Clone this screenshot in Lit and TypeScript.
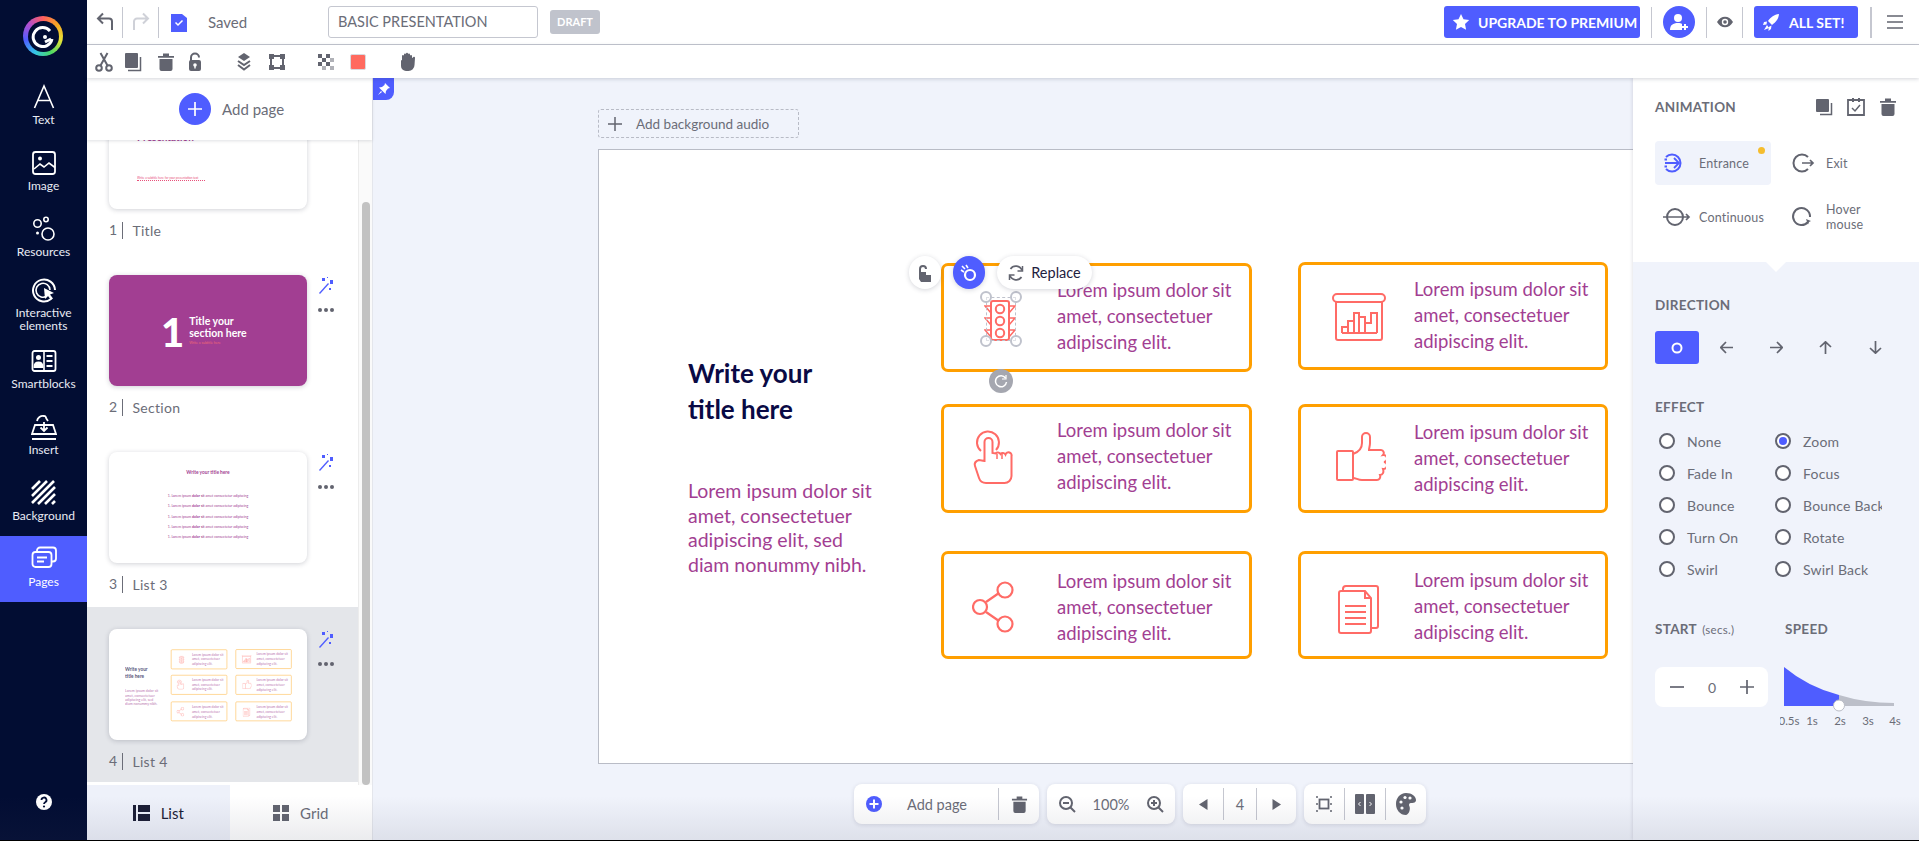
import { LitElement, html, css, svg } from "lit";
import { customElement } from "lit/decorators.js";

const I = (w: number, h: number, vb: string, body: unknown, cls = "") =>
  html`<svg class=${cls} width=${w} height=${h} viewBox=${vb} fill="none">${body}</svg>`;

const G = "#62646f";
const BLUE = "#4f5dff";
const RED = "#ff6b66";

const ic = {
  undo: (c: string) => I(18, 20, "0 0 18 20", svg`<path d="M16 18V9.5a3 3 0 0 0-3-3H3M7 1.5 2 6.500l5 5" stroke=${c} stroke-width="2"/>`),
  redo: (c: string) => I(18, 20, "0 0 18 20", svg`<path d="M2 18V9.500a3 3 0 0 1 3-3h10M11 1.500l5 5-5 5" stroke=${c} stroke-width="2"/>`),
  scissors: I(18, 20, "0 0 18 20", svg`<circle cx="4" cy="16" r="2.800" stroke=${G} stroke-width="2"/><circle cx="14" cy="16" r="2.800" stroke=${G} stroke-width="2"/><path d="M5.500 13.500 12.500 1M12.500 13.500 5.500 1" stroke=${G} stroke-width="2"/>`),
  copy: I(18, 20, "0 0 18 20", svg`<rect x="1" y="1" width="13" height="15" rx="1" fill=${G}/><path d="M16.500 5v13.500H4" stroke=${G} stroke-width="1.500"/>`),
  trash: I(18, 20, "0 0 18 20", svg`<path d="M1 4h16v1.800H1zM6 1.500h6V4H6zM2.500 7h13v10a2 2 0 0 1-2 2h-9a2 2 0 0 1-2-2z" fill=${G}/>`),
  lock: I(18, 20, "0 0 18 20", svg`<path d="M5 9V5.500a4 4 0 0 1 8 0" stroke=${G} stroke-width="2"/><rect x="3" y="8" width="12" height="11" rx="2" fill=${G}/><circle cx="9" cy="13" r="1.800" fill="#fff"/><rect x="8.300" y="13" width="1.400" height="3.500" fill="#fff"/>`),
  layers: I(18, 20, "0 0 18 20", svg`<path d="M9 1l6 4-6 4-6-4z" fill=${G}/><path d="M3 9l6 4 6-4M3 13l6 4.500 6-4.500" stroke=${G} stroke-width="2"/>`),
  group: I(18, 20, "0 0 18 20", svg`<rect x="3" y="4" width="12" height="12" stroke=${G} stroke-width="2"/><rect x="1" y="2" width="5" height="5" fill=${G}/><rect x="12" y="2" width="5" height="5" fill=${G}/><rect x="1" y="13" width="5" height="5" fill=${G}/><rect x="12" y="13" width="5" height="5" fill=${G}/>`),
  checker: I(18, 20, "0 0 18 20", svg`<g fill=${G}><rect x="1" y="2" width="4" height="4"/><rect x="9" y="2" width="4" height="4"/><rect x="5" y="6" width="4" height="4"/><rect x="13" y="6" width="4" height="4" opacity=".5"/><rect x="1" y="10" width="4" height="4"/><rect x="9" y="10" width="4" height="4"/><rect x="5" y="14" width="4" height="4" opacity=".5"/><rect x="13" y="14" width="4" height="4" opacity=".5"/></g>`),
  hand: I(18, 20, "0 0 18 20", svg`<path d="M3 8.500V4a1 1 0 0 1 2 0V2.500a1 1 0 0 1 2 0V1.800a1 1 0 0 1 2 0v.7a1 1 0 0 1 2 0V4a1 1 0 0 1 2 0v2l1-.5a1 1 0 0 1 2 .5l-.5 7a6 6 0 0 1-6 6H7a5 5 0 0 1-5-5V8.500a.6.6 0 0 1 1 0z" fill=${G}/>`),
};

const railIcons: Record<string, unknown> = {
  Text: svg`<path d="M3.500 24 13 2l9.500 22M7 16.500h12" stroke="#fff" stroke-width="1.600"/>`,
  Image: svg`<rect x="2" y="2" width="22" height="22" rx="2.500" stroke="#fff" stroke-width="1.800"/><path d="M3 19l6-5 4 3 5-4 6 4.500" stroke="#fff" stroke-width="1.600"/><circle cx="9" cy="8.500" r="2" fill="#fff"/>`,
  Resources: svg`<circle cx="6.500" cy="7.500" r="3.700" stroke="#fff" stroke-width="1.600"/><circle cx="15" cy="3.500" r="2.200" stroke="#fff" stroke-width="1.600"/><circle cx="17" cy="18" r="6" stroke="#fff" stroke-width="1.600"/><circle cx="6.500" cy="17" r="1.500" fill="#fff"/>`,
  Interactive: svg`<path d="M20 22A11 11 0 1 1 24 13" stroke="#fff" stroke-width="2"/><path d="M16 19a7 7 0 1 1 3-6" stroke="#fff" stroke-width="1.600"/><path d="M13 11l10 5-4 1.500 3 4-2 1.500-3-4-3 3z" fill="#fff"/>`,
  Smartblocks: svg`<rect x="1.500" y="3" width="23" height="20" rx="2" stroke="#fff" stroke-width="1.800"/><path d="M13 3v20" stroke="#fff" stroke-width="1.600"/><circle cx="7.500" cy="9.500" r="2.500" fill="#fff"/><path d="M3.500 19c0-6 8-6 8 0zM15.500 8h6M15.500 13h6M15.500 18h6" stroke="#fff" stroke-width="1.800" fill="#fff"/>`,
  Insert: svg`<path d="M4 11h6M16 11h6l3 9H1l3-9zM1 25h24" stroke="#fff" stroke-width="1.800"/><path d="M6 7a6 6 0 0 1 7-5c3 .5 0 0 4 5M13 8v9M9.500 13.500 13 17l3.500-3.500" stroke="#fff" stroke-width="1.800"/>`,
  Background: svg`<g stroke="#fff" stroke-width="2.600"><path d="M1 9 9 1M1 16 16 1M1 23 23 1M7 24 24 7M14 24 24 14M21 24l3-3"/></g>`,
  Pages: svg`<rect x="6" y="1.500" width="19" height="14" rx="3" stroke="#fff" stroke-width="1.800"/><rect x="1.500" y="6" width="19" height="15" rx="3" fill=${BLUE} stroke="#fff" stroke-width="1.800"/><path d="M6 11.500h10M6 15.500h7" stroke="#fff" stroke-width="1.800"/>`,
};

const rail = [
  ["Text", "Text"], ["Image", "Image"], ["Resources", "Resources"], ["Interactive", "Interactive elements"],
  ["Smartblocks", "Smartblocks"], ["Insert", "Insert"], ["Background", "Background"], ["Pages", "Pages"],
];

const cardIcons: Record<string, [number, number, string, unknown]> = {
  light: [32, 45, "0 0 32 45", svg`<rect x="7" y="4" width="18" height="39" rx="2" stroke=${RED} stroke-width="2"/><circle cx="16" cy="12" r="4.200" stroke=${RED} stroke-width="2"/><circle cx="16" cy="24" r="4.200" stroke=${RED} stroke-width="2"/><circle cx="16" cy="36" r="4.200" stroke=${RED} stroke-width="2"/><path d="M7 9H1l6 7M25 9h6l-6 7M7 21H1l6 7M25 21h6l-6 7M7 33H1l6 7M25 33h6l-6 7" stroke=${RED} stroke-width="1.500"/>`],
  chart: [54, 48, "0 0 54 48", svg`<rect x="1" y="1" width="52" height="8" rx="4" stroke=${RED} stroke-width="2"/><path d="M4 9v36a2 2 0 0 0 2 2h42a2 2 0 0 0 2-2V9" stroke=${RED} stroke-width="2"/><path d="M10 40v-6h6v-6h6v-8h5v20M16 40v-6M22 40V28M27 40V24h6v16M33 30h6V20h6v20M10 40h35" stroke=${RED} stroke-width="2"/>`],
  hand: [42, 56, "0 0 42 56", svg`<path d="M12.500 33V13a4 4 0 0 1 8 0v11l3 .5a3 3 0 0 1 5 .5 3 3 0 0 1 5 .5 3 3 0 0 1 6 2V47a7 7 0 0 1-7 7H14c-4 0-6-2-7-5l-4-12c-1-3 1-5 4-6l5.500 1" stroke=${RED} stroke-width="2"/><path d="M9 22a11 11 0 1 1 15-1" stroke=${RED} stroke-width="2"/><path d="M25 25v5M30 25v5" stroke=${RED} stroke-width="1.500"/>`],
  thumb: [50, 50, "0 0 50 50", svg`<rect x="1" y="19" width="16" height="29" rx="1" stroke=${RED} stroke-width="2"/><path d="M17 22c6-2 9-6 9-11V5a4 4 0 0 1 8 0v6c0 3-1 5-1 7h12a3 3 0 0 1 2 5 3 3 0 0 1 1 7 3 3 0 0 1-1 7c1 3 0 6-3 6 1 3-1 5-3 5H26c-4 0-6-2-9-2" stroke=${RED} stroke-width="2"/>`],
  share: [42, 52, "0 0 42 52", svg`<circle cx="8" cy="26" r="7" stroke=${RED} stroke-width="2.200"/><circle cx="33" cy="9" r="7.500" stroke=${RED} stroke-width="2.200"/><circle cx="33" cy="43" r="7.500" stroke=${RED} stroke-width="2.200"/><path d="M14 21l13-9M14 31l13 9" stroke=${RED} stroke-width="2.200"/>`],
  docs: [42, 50, "0 0 42 50", svg`<path d="M5 6V4a3 3 0 0 1 3-3h30a2 2 0 0 1 2 2v38a2 2 0 0 1-2 2h-4" stroke=${RED} stroke-width="2"/><path d="M3 6h24l6 7v33a2 2 0 0 1-2 2H3a2 2 0 0 1-2-2V8a2 2 0 0 1 2-2zM27 6v7h6" stroke=${RED} stroke-width="2"/><path d="M7 21h21M7 27h21M7 33h21M7 39h21" stroke=${RED} stroke-width="2"/>`],
};

/* coordinates on the slide's own free canvas */
const cards = [
  { x: 342, y: 113, w: 311, h: 109, ty: 14, icon: "light", cx: 59, cy: 56 },
  { x: 699, y: 112, w: 310, h: 108, ty: 14, icon: "chart", cx: 61, cy: 55 },
  { x: 342, y: 254, w: 311, h: 109, ty: 13, icon: "hand", cx: 52, cy: 53 },
  { x: 699, y: 254, w: 310, h: 109, ty: 15, icon: "thumb", cx: 63, cy: 53 },
  { x: 342, y: 401, w: 311, h: 108, ty: 17, icon: "share", cx: 52, cy: 56 },
  { x: 699, y: 401, w: 310, h: 108, ty: 16, icon: "docs", cx: 61, cy: 59 },
];

const effects = [
  ["None", "Zoom"], ["Fade In", "Focus"], ["Bounce", "Bounce Back"], ["Turn On", "Rotate"], ["Swirl", "Swirl Back"],
];

@customElement("app-root")
export class AppRoot extends LitElement {
  static styles = css`
    :host { display: block; width: 1919px; height: 841px; overflow: hidden; position: relative; background: #000;
      font-family: "Lato", "Noto Sans", sans-serif; color: #6b6d78; }
    * { box-sizing: border-box; }
    svg { display: block; flex: none; }
    .app { display: flex; height: 840px; }
    .rail { width: 87px; flex: none; background: #020d33; display: flex; flex-direction: column; color: #e9ebf3; }
    .logo { height: 74px; padding: 16px 23px 0; }
    .ring { width: 40px; height: 40px; border-radius: 50%; background: conic-gradient(#ff5f5f, #f5a623, #e8e337, #4cd964, #35c6e8, #4f5dff, #b14fd0, #ff5f5f); display: flex; align-items: center; justify-content: center; }
    .ring-in { width: 31px; height: 31px; border-radius: 50%; background: #020d33; display: flex; align-items: center; justify-content: center; }
    .ritem { height: 66px; padding-top: 10px; display: flex; flex-direction: column; align-items: center; font-size: 12px; line-height: 14px; text-align: center; gap: 3px; }
    .ritem.tight { padding-top: 5px; line-height: 12.500px; gap: 4px; }
    .ritem.on { background: #4f5dff; color: #fff; }
    .help { margin: auto 0 29px; display: flex; justify-content: center; }
    .right { flex: 1; min-width: 0; display: flex; flex-direction: column; }
    .top { height: 45px; flex: none; background: #fff; border-bottom: 1px solid #c5c7d0; display: flex; align-items: center; padding-right: 16px; }
    .m9 { margin-left: 9px; } .m8 { margin-left: 8px; } .m12 { margin-left: 12px; }
    .vd { width: 1px; height: 31px; background: #c5c7d0; flex: none; }
    .vd.m11 { margin-left: 11px; } .vd.m8 { margin-left: 8px; } .vd.m12 { margin-left: 12px; }
    .vd.thick { width: 2px; }
    .saved { margin-left: 21px; width: 60px; font-size: 15px; }
    .title { margin-left: 60px; width: 210px; height: 32px; border: 1px solid #c5c7d0; border-radius: 3px; padding-left: 9px; font-size: 14.500px; line-height: 30px; }
    .draft { margin-left: 12px; width: 50px; height: 24px; background: #c0c3cc; color: #fff; font-size: 11px; font-weight: 700; line-height: 24px; text-align: center; border-radius: 3px; }
    .sp { flex: 1; }
    .btn { height: 32px; background: #4f5dff; color: #fff; border-radius: 3px; display: flex; align-items: center; font-size: 14px; font-weight: 700; flex: none; }
    .up { width: 196px; padding-left: 8px; gap: 8px; }
    .set { width: 104px; padding-left: 9px; gap: 9px; margin-left: 11px; }
    .user { width: 32px; height: 32px; border-radius: 50%; background: #4f5dff; margin-left: 11px; display: flex; align-items: center; justify-content: center; flex: none; }
    .eye { margin-left: 9px; }
    .burger { margin-left: 15px; }
    .tools { height: 33px; flex: none; background: #fff; display: flex; align-items: center; padding-left: 8px; box-shadow: 0 1px 4px rgba(40,44,70,.2); position: relative; z-index: 5; }
    .g11 { margin-left: 11px; } .g15 { margin-left: 15px; } .g31 { margin-left: 31px; } .g33 { margin-left: 33px; }
    .swatch { width: 16px; height: 16px; background: #ff6a5f; border-radius: 2px; border: 1px solid #d9d9de; }
    .body { flex: 1; min-height: 0; display: flex; position: relative; }

    .side { width: 286px; flex: none; background: #fff; display: flex; flex-direction: column; position: relative; z-index: 3; border-right: 1px solid #e4e6ec; }
    .addp { height: 62px; flex: none; display: flex; align-items: center; padding-left: 92px; gap: 11px; background: #fff; box-shadow: 0 1px 3px rgba(40,44,70,.15); position: relative; z-index: 2; font-size: 15px; }
    .plus { width: 32px; height: 32px; border-radius: 50%; background: #4f5dff; display: flex; align-items: center; justify-content: center; }
    .lst { flex: 1; min-height: 0; display: flex; overflow: hidden; }
    .items { width: 271px; flex: none; }
    .it { height: 177px; padding: 22px 0 0 22px; display: flex; flex-wrap: wrap; align-content: flex-start; position: relative; }
    .it.first { margin-top: -64px; }
    .it.sel { background: #e4e6ea; height: 175px; }
    .thumb { width: 198px; height: 111px; background: #fff; border-radius: 8px; box-shadow: 0 1px 5px rgba(40,44,70,.22); overflow: hidden; position: relative; flex: none; }
    .acts { width: 32px; margin-left: 11px; padding-top: 2px; display: flex; flex-direction: column; gap: 14px; }
    .dots { display: flex; gap: 2px; padding-left: 0; }
    .dots i { width: 4px; height: 4px; border-radius: 50%; background: #62646f; display: block; }
    .lab { width: 100%; margin-top: 13px; font-size: 14px; line-height: 18px; display: flex; letter-spacing: .3px; }
    .lab b { font-weight: 400; border-right: 1px solid #6b6d78; padding-right: 5px; margin-right: 9px; line-height: 16px; height: 17px; }
    .track { flex: 1; background: #fafafa; border-left: 1px solid #ececec; padding: 62px 2px 0 3px; }
    .bar { height: 100%; background: #c2c2c2; border-radius: 5px; }
    .tabs { height: 55px; flex: none; display: flex; font-size: 15px; position: relative; z-index: 2; }
    .tab { width: 143px; display: flex; align-items: center; justify-content: center; gap: 11px; background: #fff; }
    .tab.on { background: #eef1fa; color: #1b1d35; }

    .canvas { flex: 1; min-width: 0; background: #f0f3fb; padding: 31px 0 0 225px; overflow: hidden; position: relative; }
    .pin { position: absolute; left: 0; top: 0; width: 21px; height: 22px; background: #4f5dff; border-radius: 0 0 8px 0; display: flex; align-items: center; justify-content: center; }
    .audio { width: 201px; height: 29px; border: 1.500px dashed #b8bbc6; border-radius: 3px; display: flex; align-items: center; gap: 14px; padding-left: 9px; font-size: 13.500px; }
    .slide { margin-top: 11px; width: 1094px; height: 615px; background: #fff; border: 1px solid #b9bcc6; position: relative; }
    .page { position: absolute; left: 0; top: 0; width: 1092px; height: 613px; color: #a23e92; }
    .t1 { position: absolute; left: 89px; top: 205px; font-size: 26px; line-height: 36px; font-weight: 700; color: #0a0a45; }
    .t2 { position: absolute; left: 89px; top: 329px; font-size: 19.500px; line-height: 24.700px; }
    .card { position: absolute; border: 3px solid #ff9f00; border-radius: 7px; }
    .cic { position: absolute; }
    .ctx { position: absolute; left: 113px; font-size: 18.500px; line-height: 26px; white-space: nowrap; }
    .thumb .page.mini { transform: scale(.181); transform-origin: 0 0; opacity: .72; }
    .sel-box { position: absolute; left: 387px; top: 147px; width: 30px; height: 44px; border: 1.500px dashed #bfc2cc; }
    .hd { position: absolute; width: 12px; height: 12px; border: 2px solid #bfc2cc; border-radius: 50%; background: rgba(255,255,255,.5); }
    .h1 { left: -7px; top: -7px; } .h2 { right: -7px; top: -7px; } .h3 { left: -7px; bottom: -7px; } .h4 { right: -7px; bottom: -7px; }
    .rot { position: absolute; left: 390px; top: 219px; width: 24px; height: 24px; border-radius: 50%; background: #a5a7b0; display: flex; align-items: center; justify-content: center; }
    .fl { position: absolute; top: 106px; height: 33px; background: #fff; border-radius: 17px; box-shadow: 0 1px 5px rgba(40,44,70,.2); display: flex; align-items: center; justify-content: center; }
    .f1 { left: 310px; width: 32px; } .f2 { left: 354px; width: 32px; background: #4f5dff; }
    .f3 { left: 398px; width: 95px; gap: 7px; color: #1e2140; font-size: 14.500px; }

    .bot { position: absolute; left: 481px; top: 706px; display: flex; gap: 8px; z-index: 2; }
    .grp { height: 40px; background: #fff; border-radius: 8px; display: flex; box-shadow: 0 1px 4px rgba(40,44,70,.14); font-size: 14.500px; }
    .c { display: flex; align-items: center; justify-content: center; height: 32px; margin-top: 4px; flex: none; }
    .dv { border-left: 1px solid #c5c7d0; }
    .w40 { width: 40px; } .w41 { width: 41px; } .w48 { width: 48px; } .w33 { width: 33px; }
    .w144 { width: 144px; justify-content: flex-start; padding-left: 12px; gap: 25px; }

    .panel { width: 286px; flex: none; background: #f0f3fb; box-shadow: -1px 0 3px rgba(40,44,70,.12); position: relative; z-index: 3; }
    .ptop { height: 184px; background: #fff; padding: 19px 22px 0; position: relative; }
    .ptop::after { content: ""; position: absolute; left: 133px; top: 184px; border: 10px solid transparent; border-top-color: #fff; border-bottom: 0; }
    .phead { display: flex; align-items: center; height: 20px; }
    .h { font-size: 13.500px; font-weight: 700; letter-spacing: .3px; line-height: 18px; }
    .hic { margin-left: auto; display: flex; gap: 14px; }
    .atabs { display: grid; grid-template-columns: 116px 116px; column-gap: 11px; row-gap: 10px; margin-top: 24px; }
    .atab { height: 44px; border-radius: 4px; display: flex; align-items: center; gap: 8px; font-size: 12.500px; line-height: 15px; position: relative; letter-spacing: .2px; }
    .atab.on { background: #f0f3fb; }
    .dot { position: absolute; right: 6px; top: 6px; width: 7px; height: 7px; border-radius: 50%; background: #f5bd2e; }
    .pbot { padding: 34px 0 0 22px; }
    .dir { display: flex; margin-top: 17px; height: 33px; align-items: center; }
    .dact { width: 44px; height: 33px; background: #4f5dff; border-radius: 3px; display: flex; align-items: center; justify-content: center; }
    .arr { width: 49.500px; display: flex; justify-content: center; }
    .arr.first { margin-left: 3px; }
    .eh { margin-top: 34px; }
    .fx { display: grid; grid-template-columns: 116px 111px; margin-top: 9px; }
    .fx div { height: 32px; display: flex; align-items: center; font-size: 14px; white-space: nowrap; overflow: hidden; letter-spacing: .2px; }
    .fx i { width: 16px; height: 16px; border: 2px solid #62646f; border-radius: 50%; background: #fff; margin: 0 12px 0 4px; flex: none; display: flex; align-items: center; justify-content: center; }
    .fx i.on::after { content: ""; width: 8px; height: 8px; border-radius: 50%; background: #4f5dff; }
    .hrow { display: flex; margin-top: 35px; }
    .hrow .h { width: 130px; } .hrow small { font-weight: 400; font-size: 11.500px; margin-left: 2px; }
    .srow { display: flex; margin-top: 28px; gap: 12px; }
    .step { width: 113px; height: 40px; background: #fff; border-radius: 8px; display: flex; align-items: center; justify-content: space-between; padding: 0 14px 0 15px; font-size: 14px; }
    .chart text { font-family: "Lato", sans-serif; font-size: 11.500px; fill: #6b6d78; text-anchor: middle; }
    .shade { position: absolute; left: 0; right: 0; top: 796px; height: 44px; pointer-events: none; z-index: 9; background: linear-gradient(rgba(60,64,90,0), rgba(60,64,90,.1)); }
    .mT1 { position: absolute; left: 28px; top: 33px; font-size: 10px; font-weight: 700; color: #a23e92; }
    .mT2 { position: absolute; left: 28px; top: 78px; width: 68px; font-size: 3px; line-height: 4px; color: #e8507a; white-space: nowrap; overflow: hidden; border-bottom: 1px dotted #e8507a; }
    .thumb.sec { background: #a23e92; color: #fff; display: flex; align-items: center; padding: 2px 0 0 52px; gap: 5px; }
    .sec .n { font-size: 40px; font-weight: 900; line-height: 40px; }
    .sec .st { font-size: 10.500px; font-weight: 700; line-height: 11.500px; }
    .sec .sb { font-size: 3.500px; line-height: 8px; color: #ee6a72; font-weight: 400; }
    .thumb.lst3 { display: flex; flex-direction: column; align-items: center; color: #a23e92; padding-top: 17px; }
    .lst3 .tt { font-size: 4.800px; font-weight: 700; margin-bottom: 15px; line-height: 7px; }
    .lst3 .ll { font-size: 3.500px; line-height: 10.300px; white-space: nowrap; }
  `;

  private page(mini: boolean) {
    return html`<div class="page ${mini ? "mini" : ""}">
      <div class="t1">Write your<br />title here</div>
      <div class="t2">Lorem ipsum dolor sit<br />amet, consectetuer<br />adipiscing elit, sed<br />diam nonummy nibh.</div>
      ${cards.map((c) => {
        const [w, h, vb, b] = cardIcons[c.icon];
        return html`<div class="card" style="left:${c.x}px;top:${c.y}px;width:${c.w}px;height:${c.h}px">
          <div class="cic" style="left:${c.cx - 3 - w / 2}px;top:${c.cy - 3 - h / 2}px">${I(w, h, vb, b)}</div>
          <div class="ctx" style="top:${c.ty - 3}px">Lorem ipsum dolor sit<br />amet, consectetuer<br />adipiscing elit.</div>
        </div>`;
      })}
    </div>`;
  }

  private acts() {
    return html`<div class="acts">
      ${I(16, 17, "0 0 16 17", svg`<path d="M1 16 10 6l1 1-9 10z" fill=${BLUE}/><path d="M4 1h3v3H4zM12 3h3v4h-3zM11 11h2v2h-2zM9 0h1v1H9z" fill=${BLUE}/>`)}
      <div class="dots"><i></i><i></i><i></i></div>
    </div>`;
  }

  render() {
    return html`<div class="app">
      <nav class="rail">
        <div class="logo"><div class="ring"><div class="ring-in">${I(24, 24, "0 0 24 24", svg`<path d="M19 7A9.500 9.500 0 1 0 21 15" stroke="#fff" stroke-width="3"/><circle cx="14" cy="13" r="2" fill="#fff"/><path d="M14 18l6-3" stroke="#fff" stroke-width="3"/>`)}</div></div></div>
        ${rail.map(([k, l]) => html`<div class="ritem ${k === "Interactive" ? "tight" : ""} ${k === "Pages" ? "on" : ""}">
          ${I(26, 26, "0 0 26 26", railIcons[k])}<span>${l}</span></div>`)}
        <div class="help">${I(18, 18, "0 0 18 18", svg`<circle cx="9" cy="9" r="8" fill="#fff"/><path d="M6.500 7a2.500 2.500 0 1 1 3.700 2.200c-.8.5-1.200.9-1.200 1.800" stroke="#020d33" stroke-width="1.800"/><circle cx="9" cy="13.500" r="1.100" fill="#020d33"/>`)}</div>
      </nav>
      <div class="right">
        <header class="top">
          <span class="m9">${ic.undo(G)}</span><div class="vd m8"></div>
          <span class="m9">${ic.redo("#cfd1d8")}</span><div class="vd m8"></div>
          <span class="m12">${I(16, 20, "0 0 16 20", svg`<path d="M0 2h11l5 4v14H0z" fill=${BLUE}/><path d="M4.500 10.500 7 13l4.500-4.500" stroke="#fff" stroke-width="1.500"/>`)}</span>
          <span class="saved">Saved</span>
          <div class="title">BASIC PRESENTATION</div>
          <div class="draft">DRAFT</div>
          <div class="sp"></div>
          <div class="btn up">${I(18, 18, "0 0 18 18", svg`<path d="M9 1l2.500 5.300 5.700.7-4.200 4 1.100 5.700L9 14l-5.100 2.700L5 11 .800 7l5.700-.7z" fill="#fff"/>`)}UPGRADE TO PREMIUM</div>
          <div class="vd m11"></div>
          <div class="user">${I(20, 20, "0 0 20 20", svg`<circle cx="9" cy="6" r="4" fill="#fff"/><path d="M1 18c0-5 3-7 8-7 2 0 3 .3 4 1v6z" fill="#fff"/><path d="M16 12v6M13 15h6" stroke="#fff" stroke-width="2"/>`)}</div>
          <div class="vd m11"></div>
          <span class="eye">${I(18, 14, "0 0 18 14", svg`<path d="M1 7c4-7 12-7 16 0-4 7-12 7-16 0z" fill=${G}/><circle cx="9" cy="7" r="3.200" fill="#fff"/><circle cx="9" cy="7" r="1.800" fill=${G}/>`)}</span>
          <div class="vd m8"></div>
          <div class="btn set">${I(17, 18, "0 0 17 18", svg`<path d="M16 1c-5 .5-8 3-11 7l4 4c4-3 6.500-6 7-11zM4 8.500 1 9l-1 3 3.500-.5zM8.500 12.500 8 16l-2.500 2 .2-4zM4 12l-3 5 5-2z" fill="#fff"/>`)}ALL SET!</div>
          <div class="vd thick m12"></div>
          <span class="burger">${I(16, 14, "0 0 16 14", svg`<path d="M0 1h16M0 7h16M0 13h16" stroke=${G} stroke-width="1.500"/>`)}</span>
        </header>
        <div class="tools">
          ${ic.scissors}<span class="g11">${ic.copy}</span><span class="g15">${ic.trash}</span><span class="g11">${ic.lock}</span>
          <span class="g31">${ic.layers}</span><span class="g15">${ic.group}</span><span class="g31">${ic.checker}</span>
          <div class="swatch g15"></div><span class="g33">${ic.hand}</span>
        </div>
        <div class="body">
          <aside class="side">
            <div class="addp"><div class="plus">${I(14, 14, "0 0 14 14", svg`<path d="M7 0v14M0 7h14" stroke="#fff" stroke-width="1.700"/>`)}</div>Add page</div>
            <div class="lst">
              <div class="items">
                <div class="it first">
                  <div class="thumb"><div class="mT1">Presentation</div><div class="mT2">Write a subtitle here for your presentation text</div></div>
                  <div class="lab"><b>1</b>Title</div>
                </div>
                <div class="it">
                  <div class="thumb sec"><div class="n">1</div><div class="st">Title your<br />section here<div class="sb">Write a subtitle here</div></div></div>
                  ${this.acts()}
                  <div class="lab"><b>2</b>Section</div>
                </div>
                <div class="it">
                  <div class="thumb lst3"><div class="tt">Write your title here</div>
                    ${[1, 2, 3, 4, 5].map(() => html`<div class="ll">1. Lorem ipsum <b>dolor sit</b> amet consectetur adipiscing</div>`)}
                  </div>
                  ${this.acts()}
                  <div class="lab"><b>3</b>List 3</div>
                </div>
                <div class="it sel">
                  <div class="thumb">${this.page(true)}</div>
                  ${this.acts()}
                  <div class="lab"><b>4</b>List 4</div>
                </div>
              </div>
              <div class="track"><div class="bar"></div></div>
            </div>
            <div class="tabs">
              <div class="tab on">${I(17, 16, "0 0 17 16", svg`<path d="M0 0h3v16H0zM5 0h12v7H5zM5 9h12v7H5z" fill="#1b1d35"/>`)}List</div>
              <div class="tab">${I(16, 16, "0 0 16 16", svg`<path d="M0 0h7v7H0zM9 0h7v7H9zM0 9h7v7H0zM9 9h7v7H9z" fill=${G}/>`)}Grid</div>
            </div>
          </aside>
          <main class="canvas">
            <div class="pin">${I(12, 12, "0 0 12 12", svg`<path d="M7 0l5 5-2 .5L8 8 7.500 11 1 4.500 4 4l2.500-2zM3 8l-3 4 4-3z" fill="#fff"/>`)}</div>
            <div class="audio">${I(14, 14, "0 0 14 14", svg`<path d="M7 0v14M0 7h14" stroke=${G} stroke-width="1.500"/>`)}Add background audio</div>
            <div class="slide">
              ${this.page(false)}
              <div class="sel-box"><span class="hd h1"></span><span class="hd h2"></span><span class="hd h3"></span><span class="hd h4"></span></div>
              <div class="rot">${I(14, 14, "0 0 14 14", svg`<path d="M11.500 4A5.500 5.500 0 1 0 12.500 8" stroke="#fff" stroke-width="1.500"/><path d="M12 1v4H8" stroke="#fff" stroke-width="1.200"/>`)}</div>
              <div class="fl f1">${I(16, 18, "0 0 16 18", svg`<path d="M3 8V5a3 3 0 0 1 6 0" stroke=${G} stroke-width="2"/><path d="M2 8h7v3h5v7H4l-2-3z" fill=${G}/>`)}</div>
              <div class="fl f2">${I(18, 18, "0 0 18 18", svg`<circle cx="10" cy="11" r="5" stroke="#fff" stroke-width="2.200"/><path d="M2 2l3 3M6 1l2 3M1 6l3 2" stroke="#fff" stroke-width="1.600"/>`)}</div>
              <div class="fl f3">${I(16, 18, "0 0 16 18", svg`<path d="M14 6.500A6.500 6.500 0 0 0 2.500 5M2 11.500A6.500 6.500 0 0 0 13.500 13" stroke=${G} stroke-width="1.700"/><path d="M14.500 2v5h-5M1.500 16v-5h5" stroke=${G} stroke-width="1.500"/>`)}Replace</div>
            </div>
            <div class="bot">
              <div class="grp">
                <div class="c w144">${I(16, 16, "0 0 16 16", svg`<circle cx="8" cy="8" r="8" fill=${BLUE}/><path d="M8 3.500v9M3.500 8h9" stroke="#fff" stroke-width="2"/>`)}Add page</div>
                <div class="c w41 dv">${I(17, 19, "0 0 18 20", svg`<path d="M1 4h16v1.800H1zM6 1.500h6V4H6zM2.500 7h13v10a2 2 0 0 1-2 2h-9a2 2 0 0 1-2-2z" fill=${G}/>`)}</div>
              </div>
              <div class="grp">
                <div class="c w40">${I(17, 17, "0 0 17 17", svg`<circle cx="7" cy="7" r="6" stroke=${G} stroke-width="2"/><path d="M11 11l5 5" stroke=${G} stroke-width="2"/><path d="M4 7h6" stroke=${G} stroke-width="2"/>`)}</div>
                <div class="c w48">100%</div>
                <div class="c w40">${I(17, 17, "0 0 17 17", svg`<circle cx="7" cy="7" r="6" stroke=${G} stroke-width="2"/><path d="M11 11l5 5" stroke=${G} stroke-width="2"/><path d="M4 7h6M7 4v6" stroke=${G} stroke-width="2"/>`)}</div>
              </div>
              <div class="grp">
                <div class="c w40">${I(9, 11, "0 0 9 11", svg`<path d="M8.500 0v11L0 5.500z" fill=${G}/>`)}</div>
                <div class="c w33 dv">4</div>
                <div class="c w40 dv">${I(9, 11, "0 0 9 11", svg`<path d="M.5 0v11L9 5.500z" fill=${G}/>`)}</div>
              </div>
              <div class="grp">
                <div class="c w40">${I(16, 16, "0 0 16 16", svg`<rect x="3.500" y="3.500" width="9" height="9" stroke=${G} stroke-width="1.800"/><path d="M0 1h2M0 8h2M0 15h2M14 1h2M14 8h2M14 15h2" stroke=${G} stroke-width="1.600"/>`)}</div>
                <div class="c w41 dv">${I(20, 20, "0 0 20 20", svg`<rect x="0" y="0" width="9" height="20" rx="1" fill=${G}/><rect x="11" y="0" width="9" height="20" rx="1" fill=${G}/><path d="M5.500 8 3.500 10l2 2M14.500 8l2 2-2 2" stroke="#fff" stroke-width="1"/>`)}</div>
                <div class="c w41 dv">${I(20, 22, "0 0 20 22", svg`<path d="M10 0c6 0 10 3.500 10 7 0 3-3.500 3-5 3-2 0-2.500 2-1.500 3.500 1 2 0 7.500-3.500 8.500C4 22 0 17 0 11S4 0 10 0z" fill=${G}/><circle cx="5" cy="9" r="1.600" fill="#fff"/><circle cx="9" cy="4.500" r="1.600" fill="#fff"/><circle cx="14" cy="5" r="1.600" fill="#fff"/><circle cx="6" cy="15" r="1.600" fill="#fff"/>`)}</div>
              </div>
            </div>
          </main>
          <aside class="panel">
            <div class="ptop">
              <div class="phead"><span class="h">ANIMATION</span>
                <div class="hic">
                  ${I(18, 20, "0 0 18 20", svg`<rect x="1" y="2" width="13" height="13" rx="1" fill=${G}/><path d="M16.500 6v11.500H5" stroke=${G} stroke-width="1.500"/>`)}
                  ${I(18, 20, "0 0 18 20", svg`<path d="M1 3h16v15H1z" stroke=${G} stroke-width="1.800"/><path d="M5 1h2v4H5zM11 1h2v4h-2z" fill=${G}/><path d="M5 11l3 3 5-6" stroke=${G} stroke-width="1.500"/>`)}
                  ${ic.trash}
                </div>
              </div>
              <div class="atabs">
                <div class="atab on">${I(36, 22, "0 0 36 22", svg`<path d="M11 5a8.500 8.500 0 1 1 0 12" stroke=${BLUE} stroke-width="2"/><path d="M10 11h14M19 6l5 5-5 5M9.500 7.500H12M9.500 14.500H12" stroke=${BLUE} stroke-width="1.800"/>`)}Entrance<span class="dot"></span></div>
                <div class="atab">${I(36, 22, "0 0 36 22", svg`<path d="M26 5a8.500 8.500 0 1 0 0 12" stroke=${G} stroke-width="2"/><path d="M20 11h11M28 8l3 3-3 3" stroke=${G} stroke-width="1.700"/>`)}Exit</div>
                <div class="atab">${I(36, 22, "0 0 36 22", svg`<circle cx="20" cy="11" r="8" stroke=${G} stroke-width="2"/><path d="M8 11h26M31 8l3 3-3 3" stroke=${G} stroke-width="1.700"/>`)}Continuous</div>
                <div class="atab">${I(36, 22, "0 0 36 22", svg`<path d="M26 16A8.500 8.500 0 1 1 28 11" stroke=${G} stroke-width="2"/><path d="M24 13l5 2-2 1-1 2.500z" fill=${G}/>`)}<span>Hover<br />mouse</span></div>
              </div>
            </div>
            <div class="pbot">
              <div class="h">DIRECTION</div>
              <div class="dir">
                <div class="dact">${I(12, 12, "0 0 12 12", svg`<circle cx="6" cy="6" r="4.500" stroke="#fff" stroke-width="2"/>`)}</div>
                ${[["M13 6.500H1M6 1 .8 6.500 6 12", "first"], ["M0 6.500h12M7 1l5.200 5.500L7 12", ""], ["M6.500 13V1M1 6 6.500 .8 12 6", ""], ["M6.500 0v12M1 7l5.500 5.200L12 7", ""]].map(
                  ([d, c]) => html`<div class="arr ${c}">${I(13, 13, "0 0 13 13", svg`<path d=${d} stroke=${G} stroke-width="1.700"/>`)}</div>`)}
              </div>
              <div class="h eh">EFFECT</div>
              <div class="fx">
                ${effects.flat().map((e) => html`<div><i class=${e === "Zoom" ? "on" : ""}></i>${e}</div>`)}
              </div>
              <div class="hrow"><div class="h">START <small>(secs.)</small></div><div class="h">SPEED</div></div>
              <div class="srow">
                <div class="step">${I(14, 14, "0 0 14 14", svg`<path d="M0 7h14" stroke=${G} stroke-width="1.700"/>`)}<span>0</span>${I(14, 14, "0 0 14 14", svg`<path d="M7 0v14M0 7h14" stroke=${G} stroke-width="1.700"/>`)}</div>
                <svg class="chart" width="125" height="62" viewBox="0 0 125 62">
                  <path d="M59 28Q85 36 114 36V39H59z" fill="#bcbfc9"/>
                  <path d="M4 0Q28 20 59 28V39H4z" fill=${BLUE}/>
                  <circle cx="59" cy="38.500" r="5.500" fill="#fff" stroke="#b9bcc6"/>
                  <text x="9" y="58">0.5s</text><text x="32" y="58">1s</text><text x="60" y="58">2s</text><text x="88" y="58">3s</text><text x="115" y="58">4s</text>
                </svg>
              </div>
            </div>
          </aside>
        </div>
      </div>
    </div>
    <div class="shade"></div>`;
  }
}
